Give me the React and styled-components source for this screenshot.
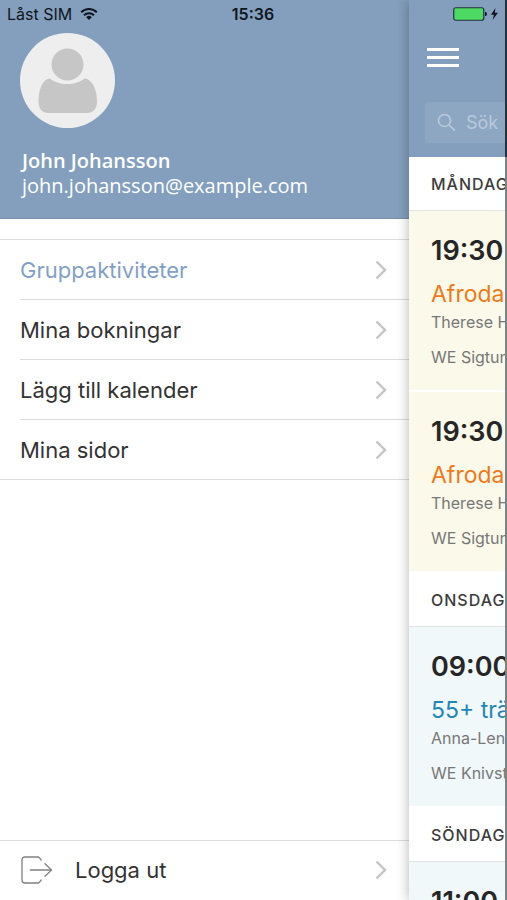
import styled, { createGlobalStyle } from "styled-components";

const menuItems = [
  { label: "Gruppaktiviteter", active: true },
  { label: "Mina bokningar" },
  { label: "Lägg till kalender" },
  { label: "Mina sidor" },
];

const schedule = [
  {
    day: "MÅNDAG",
    tone: "warm",
    classes: [
      { time: "19:30", name: "Afrodans", trainer: "Therese H", place: "WE Sigtuna" },
      { time: "19:30", name: "Afrodans", trainer: "Therese H", place: "WE Sigtuna" },
    ],
  },
  {
    day: "ONSDAG",
    tone: "cool",
    classes: [
      { time: "09:00", name: "55+ träning", trainer: "Anna-Lena", place: "WE Knivsta" },
    ],
  },
  {
    day: "SÖNDAG",
    tone: "cool",
    classes: [
      { time: "11:00", name: "55+ träning", trainer: "Anna-Lena", place: "WE Knivsta" },
    ],
  },
];

const tones = {
  warm: { background: "#fbfaea", color: "#f07818" },
  cool: { background: "#f1f8fa", color: "#1f86b8" },
};

const WifiIcon = () => (
  <svg width="18" height="14" viewBox="0 0 18 14" fill="none" stroke="#10161d" strokeWidth="2">
    <path d="M1.2 5.2a11 11 0 0 1 15.6 0" />
    <path d="M4 8.2a7.1 7.1 0 0 1 10 0" />
    <path d="M9 13 6.2 10.2a4 4 0 0 1 5.6 0z" fill="#10161d" stroke="none" />
  </svg>
);

const BatteryIcon = () => (
  <svg width="46" height="14" viewBox="0 0 46 14">
    <rect x="0.75" y="0.75" width="30" height="12.5" rx="2" fill="#4cd964" stroke="#26323d" strokeWidth="1.2" />
    <path d="M32 4.8q2 .4 2 2.2t-2 2.2z" fill="#10161d" />
    <path d="M42.5 1 38 7.8h3L39.5 13 45 5.8h-3.2z" fill="#10161d" />
  </svg>
);

const AvatarIcon = () => (
  <svg width="95" height="95" viewBox="0 0 95 95">
    <circle cx="47.5" cy="47.5" r="47.5" fill="#eeeeee" />
    <path
      d="M30 45.5c4 3.500 10 5.500 17 5.500s13.500-2 17.500-5.500c7 .5 12.500 10 12.500 23 0 7-3.500 11.500-10.500 11.500h-38C22 80 18.500 75.500 18.500 68.500c0-13 4.500-22.500 11.500-23z"
      fill="#c6c6c6"
    />
    <circle cx="47.500" cy="31.500" r="17.500" fill="#eeeeee" />
    <circle cx="47.500" cy="31.500" r="16" fill="#c6c6c6" />
  </svg>
);

const Chevron = () => (
  <svg width="12" height="20" viewBox="0 0 12 20" fill="none" stroke="#c4c4c6" strokeWidth="2.4">
    <path d="m1.500 1.500 8.500 8.500-8.500 8.500" />
  </svg>
);

const LogoutIcon = () => (
  <svg width="32" height="28" viewBox="0 0 32 28" fill="none" stroke="#808080" strokeWidth="1.300" strokeLinecap="round">
    <path d="M20 4.200V3.500L17.500 1H4Q1 1 1 4v20q0 3 3 3h13.500l2.500-2.500v-.7" />
    <path d="M9.500 14H30" />
    <path d="m24 7.800 6.500 6.200-6.500 6.200" />
  </svg>
);

const SearchIcon = () => (
  <svg width="19" height="19" viewBox="0 0 19 19" fill="none" stroke="#b9c9db" strokeWidth="1.600">
    <circle cx="7.500" cy="7.500" r="6" />
    <path d="m12 12 6 5.600" />
  </svg>
);

const App = () => {
  return (
    <>
      <GlobalStyle />
      <Screen>
        <StatusBar>
          <Carrier>
            Låst SIM <WifiIcon />
          </Carrier>
          <Clock>15:36</Clock>
          <Battery>
            <BatteryIcon />
          </Battery>
        </StatusBar>

        <Drawer>
          <Profile>
            <AvatarIcon />
            <UserName>John Johansson</UserName>
            <Email>john.johansson@example.com</Email>
          </Profile>
          <Menu>
            {menuItems.map((item) => (
              <li key={item.label}>
                <MenuLink href="#" $active={item.active}>
                  {item.label}
                  <Chevron />
                </MenuLink>
              </li>
            ))}
          </Menu>
          <LogoutButton type="button">
            <LogoutIcon />
            <span>Logga ut</span>
            <Chevron />
          </LogoutButton>
        </Drawer>

        <Page>
          <PageHeader>
            <MenuButton type="button" aria-label="Meny">
              <span />
              <span />
              <span />
            </MenuButton>
            <SearchBox>
              <SearchIcon />
              <input type="search" placeholder="Sök" aria-label="Sök" />
            </SearchBox>
          </PageHeader>
          {schedule.map((group) => (
            <Day key={group.day}>
              <DayTitle>{group.day}</DayTitle>
              {group.classes.map((item, id) => (
                <ClassCard key={id} $tone={tones[group.tone]}>
                  <time>{item.time}</time>
                  <h3>{item.name}</h3>
                  <p>{item.trainer}</p>
                  <p className="place">{item.place}</p>
                </ClassCard>
              ))}
            </Day>
          ))}
        </Page>
      </Screen>
    </>
  );
};

const GlobalStyle = createGlobalStyle`
  * {
    box-sizing: border-box;
  }

  body {
    margin: 0;
    font-family: Inter, "Liberation Sans", sans-serif;
    color: #333;
  }

  svg {
    display: block;
    flex-shrink: 0;
  }
`;

const Screen = styled.div`
  position: relative;
  display: flex;
  height: 100vh;
  overflow: hidden;
  background: #fff;
`;

const StatusBar = styled.div`
  position: absolute;
  top: 0;
  left: 0;
  right: 0;
  z-index: 2;
  display: grid;
  grid-template-columns: 1fr auto 1fr;
  align-items: center;
  height: 28px;
  padding: 0 8px 0 7px;
  font-size: 16px;
  color: #10161d;
`;

const Carrier = styled.div`
  display: flex;
  align-items: center;
  gap: 8px;
`;

const Clock = styled.div`
  font-weight: 600;
`;

const Battery = styled.div`
  justify-self: end;
`;

const Drawer = styled.aside`
  flex: 1;
  min-width: 0;
  display: flex;
  flex-direction: column;
`;

const Profile = styled.header`
  height: 219px;
  padding: 33px 20px 0;
  background: #839fbd;
  border-bottom: 1px solid #7890aa;
  font-family: "Open Sans", "Noto Sans", sans-serif;
  font-size: 20px;
  line-height: 25px;
  color: #fff;
`;

const UserName = styled.div`
  margin-top: 20px;
  padding-left: 2px;
  font-weight: 600;
`;

const Email = styled.div`
  padding-left: 2px;
`;

const Menu = styled.ul`
  list-style: none;
  margin: 20px 0 0;
  padding: 0 0 0 20px;
  border-top: 1px solid #dcdcde;
  border-bottom: 1px solid #dcdcde;

  li + li {
    border-top: 1px solid #dcdcde;
  }
`;

const MenuLink = styled.a`
  display: flex;
  align-items: center;
  justify-content: space-between;
  height: 59px;
  padding-right: 22px;
  font-size: 22px;
  color: ${({ $active }) => ($active ? "#839fc6" : "#333")};
  text-decoration: none;
`;

const LogoutButton = styled.button`
  display: flex;
  align-items: center;
  gap: 22px;
  height: 60px;
  margin-top: auto;
  padding: 0 22px 2px 21px;
  border: 0;
  border-top: 1px solid #dcdcde;
  background: transparent;
  font: inherit;
  font-size: 22px;
  color: #333;
  text-align: left;

  span {
    flex: 1;
  }
`;

const Page = styled.main`
  width: 98px;
  overflow: hidden;
  background: #fff;
  box-shadow: 0 0 12px rgba(0, 0, 0, 0.3);
  white-space: nowrap;
`;

const PageHeader = styled.header`
  height: 157px;
  padding: 48px 0 0 16px;
  overflow: hidden;
  background: #839fbd;
  border-right: 2px solid #27303a;
`;

const MenuButton = styled.button`
  display: flex;
  flex-direction: column;
  gap: 5px;
  width: 34px;
  padding: 0 0 0 2px;
  border: 0;
  background: transparent;

  span {
    height: 3px;
    background: #fff;
  }
`;

const SearchBox = styled.label`
  display: flex;
  align-items: center;
  gap: 10px;
  width: 200px;
  height: 41px;
  margin-top: 35px;
  padding-left: 12px;
  border-radius: 4px;
  background: #8da7c3;

  input {
    width: 100px;
    padding: 0;
    border: 0;
    outline: 0;
    background: transparent;
    font: inherit;
    font-size: 18px;
  }

  input::placeholder {
    color: #b9c9db;
  }
`;

const Day = styled.section`
  overflow: hidden;
  border-right: 2px solid #7d8285;
`;

const DayTitle = styled.h2`
  height: 54px;
  margin: 0;
  padding-left: 22px;
  border-bottom: 1px solid #e2e4e4;
  font-size: 16px;
  font-weight: 500;
  line-height: 54px;
  letter-spacing: 1px;
  color: #3c3c3c;
`;

const ClassCard = styled.article`
  padding: 22px 0 21px 22px;
  border-bottom: 2px solid #fff;
  background: ${({ $tone }) => $tone.background};

  time {
    display: block;
    font-size: 27px;
    font-weight: 600;
    line-height: 36px;
    color: #262626;
  }

  h3 {
    margin: 9px 0 0;
    font-size: 23px;
    font-weight: 400;
    line-height: 32px;
    color: ${({ $tone }) => $tone.color};
  }

  p {
    margin: 0;
    font-size: 16px;
    line-height: 24px;
    color: #777;
  }

  .place {
    margin-top: 11px;
  }
`;

export default App;
